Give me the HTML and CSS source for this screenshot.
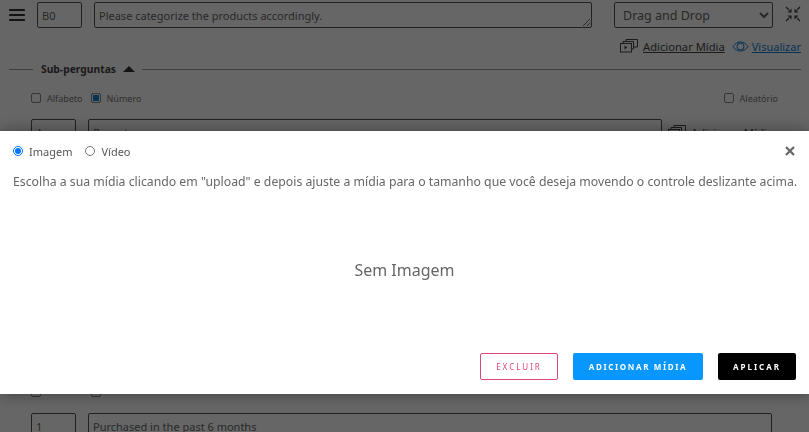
FILE: index.html
```html
<!DOCTYPE html>
<html lang="pt">
<head>
    <meta charset="UTF-8">
    <meta name="viewport" content="width=device-width, initial-scale=1.0">
    <title>Adicionar Mídia</title>
    <link rel="stylesheet" href="styles.css">
</head>
<body>
    <div class="page">
        <div class="question-row">
            <svg class="menu-icon" width="16" height="14" viewBox="0 0 16 14"><path d="M1 2h14M1 7h14M1 12h14" stroke="#333" stroke-width="2.200" stroke-linecap="round"/></svg>
            <input class="field code-field" type="text" value="B0">
            <textarea class="field question-text">Please categorize the products accordingly.</textarea>
            <select class="field type-select"><option>Drag and Drop</option></select>
            <svg class="compress-icon" width="16" height="16" viewBox="0 0 16 16">
                <path d="M1 1l3 3M15 1l-3 3M1 15l3-3M15 15l-3-3" stroke="#444" stroke-width="1.300"/>
                <path d="M6.500 6.500V2.500l-4 4zM9.500 6.500V2.500l4 4zM6.500 9.500v4l-4-4zM9.500 9.500v4l4-4z" fill="#444"/>
            </svg>
        </div>

        <div class="link-row">
            <svg class="media-icon" width="18" height="14" viewBox="0 0 18 14"><g fill="none" stroke="#444"><rect x="0.500" y="4.500" width="11" height="8.500"/><path d="M3 4V2.500h10.500V10H12M6 2V0.500h11.500V8H14"/></g><path d="M4.500 6.500l3 2-3 2z" fill="#444"/></svg>
            <a class="media-link" href="#">Adicionar Mídia</a>
            <svg class="eye-icon" width="17" height="11" viewBox="0 0 17 11"><path d="M1 5.500C3 2.500 5.500 1 8.500 1s5.500 1.500 7.500 4.500C14 8.500 11.500 10 8.500 10S3 8.500 1 5.500z" fill="none" stroke="#0f7dd8"/><circle cx="8.500" cy="5.500" r="3.500" fill="none" stroke="#0f7dd8"/></svg>
            <a class="preview-link" href="#">Visualizar</a>
        </div>

        <div class="section-title">
            <span class="section-name">Sub-perguntas</span>
            <span class="caret-up"></span>
        </div>

        <div class="options-row">
            <span class="check-item"><span class="check"></span>Alfabeto</span>
            <span class="check-item"><span class="check checked"></span>Número</span>
            <span class="check-item random"><span class="check"></span>Aleatório</span>
        </div>

        <div class="sub-row">
            <input class="field sub-code" type="text" value="A">
            <input class="field sub-text short" type="text" value="Recent">
            <svg class="media-icon" width="18" height="14" viewBox="0 0 18 14"><g fill="none" stroke="#444"><rect x="0.500" y="4.500" width="11" height="8.500"/><path d="M3 4V2.500h10.500V10H12M6 2V0.500h11.500V8H14"/></g></svg>
            <a class="media-link" href="#">Adicionar Mídia</a>
        </div>

        <div class="options-row lower">
            <span class="check-item"><span class="check"></span></span>
            <span class="check-item"><span class="check"></span></span>
        </div>

        <div class="sub-row last">
            <input class="field sub-code" type="text" value="1">
            <input class="field sub-text" type="text" value="Purchased in the past 6 months">
        </div>
    </div>

    <div class="overlay"></div>

    <div class="modal">
        <div class="modal-top">
            <label class="radio-item"><input type="radio" name="media" checked>Imagem</label>
            <label class="radio-item"><input type="radio" name="media">Vídeo</label>
            <svg class="close-icon" width="10" height="10" viewBox="0 0 10 10"><path d="M1 1l8 8M9 1l-8 8" stroke="#666" stroke-width="2.200"/></svg>
        </div>
        <p class="modal-help">Escolha a sua mídia clicando em "upload" e depois ajuste a mídia para o tamanho que você deseja movendo o controle deslizante acima.</p>
        <div class="no-image">Sem Imagem</div>
        <div class="modal-actions">
            <button class="btn btn-delete">EXCLUIR</button>
            <button class="btn btn-add">ADICIONAR MÍDIA</button>
            <button class="btn btn-apply">APLICAR</button>
        </div>
    </div>
</body>
</html>
```

FILE: styles.css
```css
html, body {
    height: 100%;
}

body {
    margin: 0;
    overflow: hidden;
    background-color: #fff;
    font-family: "Noto Sans", Arial, sans-serif;
    font-size: 12px;
    color: #333;
}

.page {
    height: 432px;
    overflow: hidden;
    box-sizing: border-box;
    padding: 2px 8px 0 9px;
}

.field {
    box-sizing: border-box;
    border: 1px solid #555;
    border-radius: 2px;
    background-color: #fff;
    color: #666;
    font-family: "Noto Sans", Arial, sans-serif;
    font-size: 11px;
    padding: 0 4px;
}

.question-row {
    display: flex;
    align-items: flex-start;
    height: 26px;
}

.menu-icon {
    margin: 6px 12px 0 0;
}

.code-field {
    width: 45px;
    height: 26px;
}

.question-text {
    width: 498px;
    height: 26px;
    margin-left: 12px;
    padding-top: 5px;
}

.type-select {
    width: 159px;
    height: 26px;
    margin-left: 22px;
    font-size: 12.500px;
}

.compress-icon {
    margin: 4px 0 0 12px;
}

.link-row {
    display: flex;
    align-items: center;
    justify-content: flex-end;
    height: 18px;
    margin-top: 9px;
    font-size: 11px;
}

.media-icon {
    margin-right: 5px;
}

.media-link {
    color: #444;
    font-size: 11.200px;
}

.eye-icon {
    margin: 0 3px 0 7px;
}

.preview-link {
    color: #0f7dd8;
}

.section-title {
    display: flex;
    align-items: center;
    height: 14px;
    margin-top: 7px;
    font-weight: bold;
    font-size: 10.300px;
    color: #444;
}

.section-title::before {
    content: "";
    width: 24px;
    border-top: 1px solid #999;
    margin-right: 8px;
}

.section-title::after {
    content: "";
    flex: 1;
    border-top: 1px solid #999;
    margin-left: 7px;
}

.caret-up {
    width: 0;
    height: 0;
    margin-left: 7px;
    border-left: 6px solid transparent;
    border-right: 6px solid transparent;
    border-bottom: 6px solid #333;
}

.options-row {
    display: flex;
    align-items: center;
    height: 16px;
    margin: 14px 0 0 22px;
    font-size: 9px;
    color: #777;
}

.options-row.lower {
    margin-top: 239px;
    gap: 50px;
}

.check-item {
    display: flex;
    align-items: center;
    margin-right: 8px;
}

.options-row.lower .check-item {
    margin-right: 0;
}

.check-item.random {
    margin: 0 23px 0 auto;
}

.check {
    box-sizing: border-box;
    width: 10px;
    height: 10px;
    margin-right: 6px;
    border: 1px solid #888;
    border-radius: 2px;
    background-color: #fff;
}

.options-row.lower .check {
    margin-right: 0;
}

.check.checked {
    background-color: #0a84d8;
    box-shadow: inset 0 0 0 1px #fff;
}

.sub-row {
    display: flex;
    align-items: center;
    margin: 13px 0 0 22px;
    font-size: 11px;
}

.sub-code {
    width: 45px;
    height: 26px;
}

.sub-text {
    width: 684px;
    height: 26px;
    margin-left: 12px;
}

.sub-text.short {
    width: 574px;
    margin-right: 6px;
}

.overlay {
    position: fixed;
    inset: 0;
    background-color: rgba(0, 0, 0, 0.6);
}

.modal {
    position: fixed;
    left: 0;
    right: 0;
    top: 131px;
    height: 263px;
    box-sizing: border-box;
    padding: 12px 13px 0 13px;
    background-color: #fff;
    box-shadow: 0 0 15px rgba(0, 0, 0, 0.4);
}

.modal-top {
    display: flex;
    align-items: center;
    height: 16px;
}

.radio-item {
    display: flex;
    align-items: center;
    margin-right: 13px;
    font-size: 11px;
    color: #555;
}

.radio-item input {
    width: 10px;
    height: 10px;
    margin: 0 6px 0 0;
}

.close-icon {
    margin: 0 1px 0 auto;
}

.modal-help {
    margin: 15px 0 0 0;
    font-size: 12.250px;
    line-height: 16px;
    color: #666;
    white-space: nowrap;
}

.no-image {
    margin-top: 69px;
    text-align: center;
    font-size: 16px;
    line-height: 22px;
    color: #666;
}

.modal-actions {
    display: flex;
    justify-content: flex-end;
    gap: 15px;
    margin-top: 72px;
}

.btn {
    box-sizing: border-box;
    height: 27px;
    padding: 0;
    border: 1px solid transparent;
    border-radius: 2px;
    font-family: "Noto Sans", Arial, sans-serif;
    font-size: 8px;
    font-weight: bold;
    letter-spacing: 2px;
}

.btn-delete {
    width: 78px;
    background-color: #fff;
    border-color: #e0457b;
    color: #e0457b;
    font-weight: normal;
}

.btn-add {
    width: 130px;
    background-color: #0797ff;
    color: #fff;
    letter-spacing: 1.650px;
}

.btn-apply {
    width: 78px;
    background-color: #000;
    color: #fff;
}
```
